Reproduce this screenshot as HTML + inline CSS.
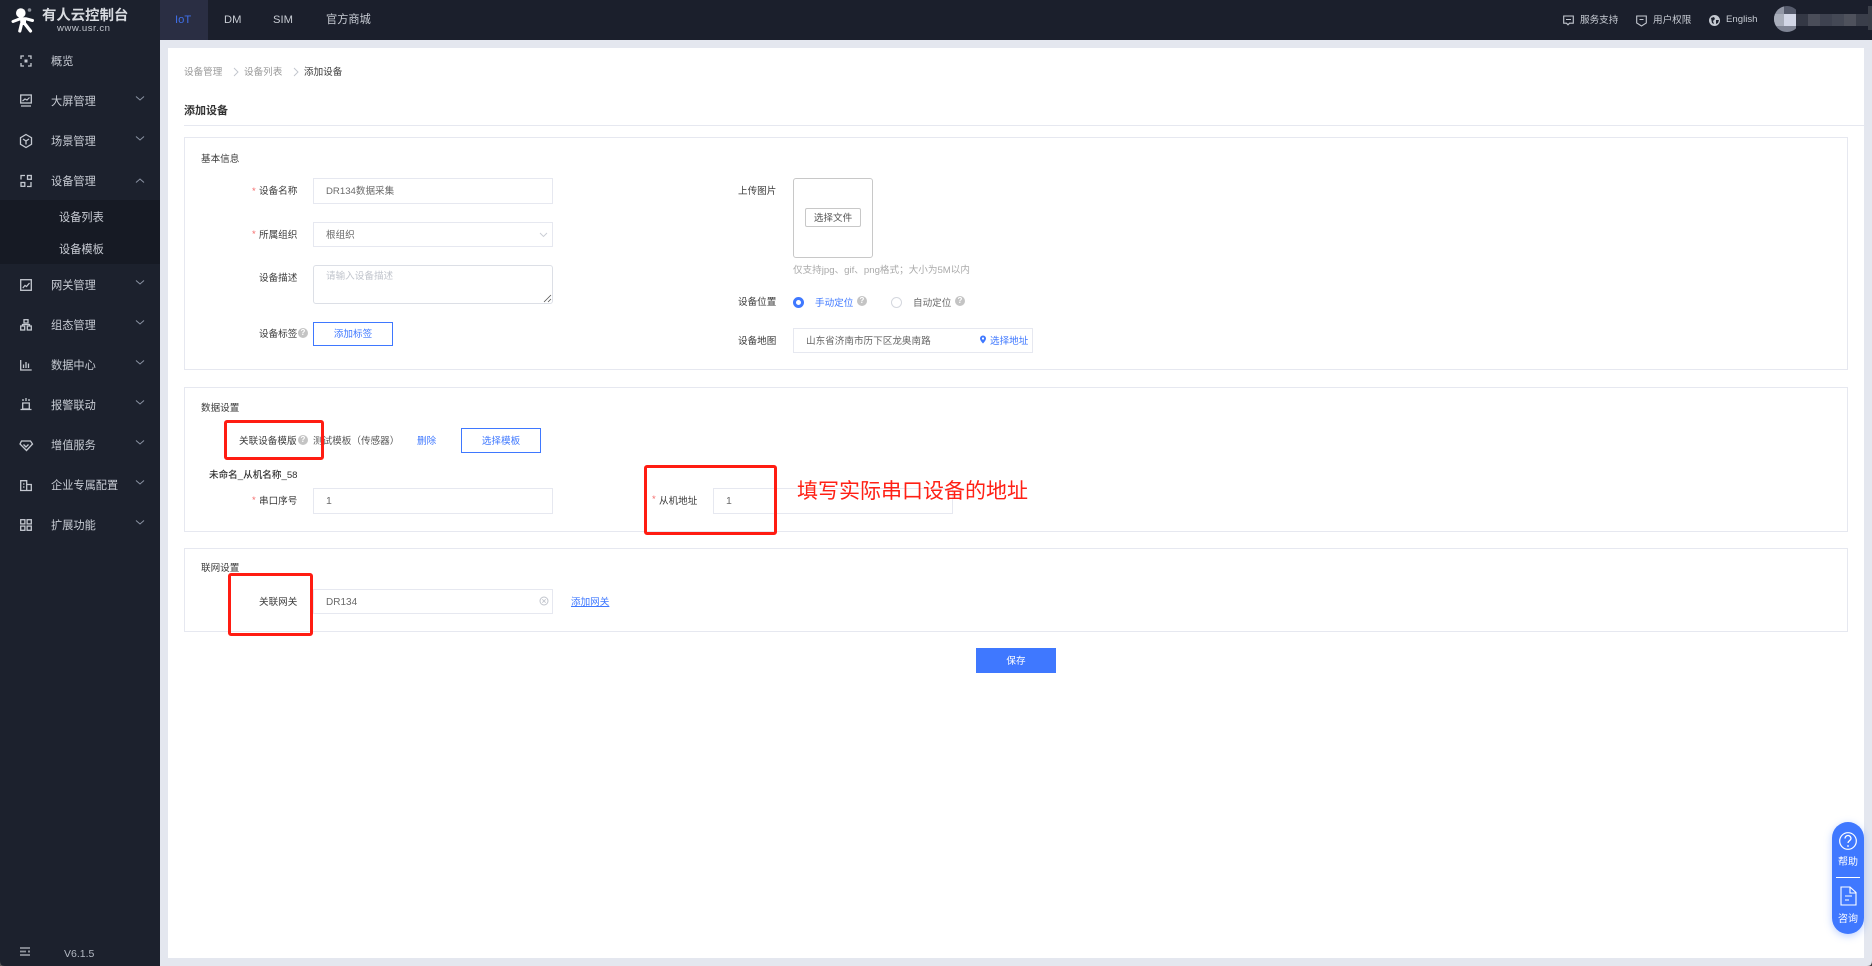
<!DOCTYPE html>
<html lang="zh-CN"><head><meta charset="utf-8"><title>添加设备</title>
<style>
*{box-sizing:border-box}
html,body{margin:0;padding:0;width:1872px;height:966px;overflow:hidden;background:#e4e7ef;font-family:"Liberation Sans","Noto Sans CJK SC",sans-serif}
.a{position:absolute}
.t{position:absolute;white-space:nowrap;line-height:20px;height:20px}
.s{font-size:11.2px;color:#c8ccd4}
.l{font-size:9.6px;color:#3a3a3a;margin-top:1px}
.v{font-size:9.6px;color:#6a6a6a;margin-top:1px}
.b{font-size:9.6px;color:#3f78ff;margin-top:1px}
.st{font-size:9.6px;color:#f56c6c}
.p{position:absolute;left:184px;width:1664px;background:#fff;border:1px solid #e6e8f0}
.i{position:absolute;background:#fff;border:1px solid #e6e8f0}
.q{position:absolute;width:10px;height:10px;border-radius:50%;background:#c4c4c4;color:#fff;font-size:8px;line-height:10px;text-align:center;font-weight:700}
.btn{position:absolute;border:1px solid #3f78ff;color:#3f78ff;font-size:9.6px;text-align:center;background:#fff}
.r{position:absolute;border:3px solid #ff1c12;border-radius:3px}
svg{position:absolute;overflow:visible}
.ic{fill:none;stroke:#c4c8d0;stroke-width:1.3}
.ch{fill:none;stroke:#8b93a3;stroke-width:1}
</style></head><body>

<!-- header -->
<div class="a" style="left:0;top:0;width:1872px;height:40px;background:#1b1f2c"></div>
<div class="a" style="left:160px;top:0;width:48px;height:40px;background:#2a2e43"></div>
<div class="t" style="left:175px;top:10px;font-size:11.2px;color:#3f6fe8">IoT</div>
<div class="t" style="left:224px;top:10px;font-size:11.2px;color:#c8ccd4">DM</div>
<div class="t" style="left:273px;top:10px;font-size:11.2px;color:#c8ccd4">SIM</div>
<div class="t s" style="left:326px;top:10px">官方商城</div>

<!-- sidebar -->
<div class="a" style="left:0;top:0;width:160px;height:966px;background:#1c212d"></div>
<div class="a" style="left:0;top:200px;width:160px;height:64px;background:#161a24"></div>
<svg style="left:0;top:0" width="40" height="40" viewBox="0 0 40 40">
<circle cx="20.800" cy="13" r="4.800" fill="#fff"/>
<path d="M13 21.500 L20 18.800 L26 18.800 L32.500 20.500" fill="none" stroke="#fff" stroke-width="3" stroke-linecap="round"/>
<path d="M20 18.500 L26 18.500 L26 25 L20.500 25 Z" fill="#fff"/>
<path d="M21.500 24 L19.800 31 M25 24 L30.500 31" fill="none" stroke="#fff" stroke-width="3.200" stroke-linecap="round"/>
<circle cx="29.500" cy="10" r="1.800" fill="#8a8f98"/>
</svg>
<div class="t" style="left:42px;top:6px;font-size:14.4px;font-weight:700;color:#d8dbe0">有人云控制台</div>
<div class="t" style="left:57px;top:19px;font-size:9.6px;font-weight:400;color:#c0c4cc;letter-spacing:.5px">www.usr.cn</div>

<div class="t s" style="left:51px;top:52px">概览</div>
<div class="t s" style="left:51px;top:92px">大屏管理</div>
<div class="t s" style="left:51px;top:132px">场景管理</div>
<div class="t s" style="left:51px;top:172px">设备管理</div>
<div class="t s" style="left:59px;top:208px">设备列表</div>
<div class="t s" style="left:59px;top:240px">设备模板</div>
<div class="t s" style="left:51px;top:276px">网关管理</div>
<div class="t s" style="left:51px;top:316px">组态管理</div>
<div class="t s" style="left:51px;top:356px">数据中心</div>
<div class="t s" style="left:51px;top:396px">报警联动</div>
<div class="t s" style="left:51px;top:436px">增值服务</div>
<div class="t s" style="left:51px;top:476px">企业专属配置</div>
<div class="t s" style="left:51px;top:516px">扩展功能</div>

<svg style="left:0;top:0" width="160" height="560">
<g class="ic">
<path d="M21 59v-3h3M28 56h3v3M31 63v3h-3M24 66h-3v-3"/><rect x="24.500" y="59.500" width="3" height="3" fill="#c4c8d0" stroke="none"/>
<rect x="20.700" y="95" width="10.600" height="8"/><path d="M22.500 101l2.500-2 2 1 2.500-2.500M21 106h10" stroke-width="1.200"/>
<path d="M26 134.500l5.500 3.200v6.600l-5.500 3.200-5.500-3.200v-6.600z"/><path d="M23 139l3 2 3-2M26 141v3.500"/>
<path d="M25 175.500h-4v4"/><rect x="27.500" y="175.500" width="3.800" height="3.800"/><rect x="21" y="182.500" width="3.800" height="3.800"/><path d="M31 182v4.500h-4"/>
<rect x="20.700" y="279.700" width="10.600" height="10.600"/><path d="M22.800 288l2.200-2.500 1.500 1 3-3.500"/>
<rect x="24" y="319.700" width="4" height="3.300"/><rect x="20.700" y="326" width="4" height="4"/><rect x="27.300" y="326" width="4" height="4"/><path d="M22.500 326v-1.500h7v1.500"/>
<path d="M20.700 360v10h11M23.500 368v-3.500M26 368v-6M28.500 368v-4.500"/>
<path d="M23 401v-2M26 401v-3M29 401v-2M22.700 403h6.600v6h-6.600zM20.500 409.500h11"/>
<path d="M21.500 441h9l2 3-6 6.500-6.500-6.500z"/><path d="M23.500 444.500l2.500 2.500 2.500-2.500"/>
<path d="M20.700 490.500V480.700h6v9.800M26.700 484.500h4.600v6M20 490.500h12"/><path d="M23 484h1.500M23 487h1.500"/>
<rect x="20.700" y="519.700" width="4.200" height="4.200"/><rect x="27.100" y="519.700" width="4.200" height="4.200"/><rect x="20.700" y="526.100" width="4.200" height="4.200"/><rect x="27.100" y="526.100" width="4.200" height="4.200"/>
</g>
<g class="ch">
<path d="M136 96.500l4 3.500 4-3.500M136 136.500l4 3.500 4-3.500M136 182.500l4-3.500 4 3.500M136 280.500l4 3.500 4-3.500M136 320.500l4 3.500 4-3.500M136 360.500l4 3.500 4-3.500M136 400.500l4 3.500 4-3.500M136 440.500l4 3.500 4-3.500M136 480.500l4 3.500 4-3.500M136 520.500l4 3.500 4-3.500"/>
</g>
</svg>
<svg style="left:20px;top:947px" width="11" height="10"><path d="M0 1h10M0 4.500h6M0 8h10" stroke="#8f939b" stroke-width="1.800" fill="none"/><rect x="8" y="3.500" width="2" height="2" fill="#8f939b"/></svg>
<div class="t" style="left:64px;top:944px;font-size:10.500px;color:#b4bac4">V6.1.5</div>

<!-- header right -->
<svg style="left:1563px;top:15px" width="11" height="11"><path d="M.7 1h9.600v7.200H6.500L5 9.800 3.500 8.200H.7zM3 4.500h5" fill="none" stroke="#c4c8d0" stroke-width="1.100"/></svg>
<div class="t" style="left:1580px;top:11px;font-size:9.6px;color:#c8ccd4">服务支持</div>
<svg style="left:1636px;top:15px" width="11" height="12"><path d="M.7 1h9.600v7L5.500 11 .7 8zM3.500 4.500h4" fill="none" stroke="#c4c8d0" stroke-width="1.100"/></svg>
<div class="t" style="left:1653px;top:11px;font-size:9.6px;color:#c8ccd4">用户权限</div>
<svg style="left:1709px;top:15px" width="11" height="11"><circle cx="5.500" cy="5.500" r="5.500" fill="#c4c8d0"/><path d="M2 3l3-1 1 2-2 2 1 3-2-1zM7 5l3 0-1 3-2 1z" fill="#1b1f2c"/></svg>
<div class="t" style="left:1726px;top:10px;font-size:9.6px;color:#c8ccd4">English</div>
<div class="a" style="left:1774px;top:6px;width:26px;height:26px;border-radius:50%;overflow:hidden;background:#1b1f2c">
<div class="a" style="left:0;top:0;width:10px;height:26px;background:#9297a6"></div>
<div class="a" style="left:10px;top:0;width:12px;height:8px;background:#565b6c"></div>
<div class="a" style="left:10px;top:8px;width:12px;height:12px;background:#d2d6e6"></div>
<div class="a" style="left:0;top:8px;width:10px;height:12px;background:#a9aebb"></div>
<div class="a" style="left:0;top:20px;width:22px;height:6px;background:#7f8494"></div>
<div class="a" style="left:22px;top:0;width:4px;height:26px;background:#1b1f2c"></div>
</div>
<div class="a" style="left:1796px;top:14px;width:12px;height:12px;background:#343845"></div>
<div class="a" style="left:1808px;top:14px;width:12px;height:12px;background:#4a4d59"></div>
<div class="a" style="left:1820px;top:14px;width:12px;height:12px;background:#3e4250"></div>
<div class="a" style="left:1832px;top:14px;width:12px;height:12px;background:#444855"></div>
<div class="a" style="left:1844px;top:14px;width:12px;height:12px;background:#4e515c"></div>
<div class="a" style="left:1856px;top:14px;width:12px;height:12px;background:#3a3e4a"></div>
<div class="a" style="left:1868px;top:6px;width:4px;height:24px;background:#3a3e48"></div>

<!-- card -->
<div class="a" style="left:168px;top:48px;width:1696px;height:910px;background:#fff"></div>
<div class="t v" style="left:184px;top:62px;color:#999">设备管理</div>
<svg style="left:233px;top:67px" width="6" height="10"><path d="M1 1l4 4-4 4" fill="none" stroke="#c0c4cc" stroke-width=".9"/></svg>
<div class="t v" style="left:244px;top:62px;color:#999">设备列表</div>
<svg style="left:293px;top:67px" width="6" height="10"><path d="M1 1l4 4-4 4" fill="none" stroke="#c0c4cc" stroke-width=".9"/></svg>
<div class="t l" style="left:304px;top:62px">添加设备</div>
<div class="t" style="left:184px;top:101px;font-size:11px;font-weight:700;color:#333">添加设备</div>
<div class="a" style="left:184px;top:125px;width:1680px;height:1px;background:#e6e8f0"></div>

<!-- panel 1 -->
<div class="p" style="top:137px;height:233px"></div>
<div class="t l" style="left:201px;top:149px">基本信息</div>
<div class="t st" style="left:252px;top:182px">*</div><div class="t l" style="left:259px;top:181px">设备名称</div>
<div class="i" style="left:313px;top:178px;width:240px;height:26px"></div>
<div class="t v" style="left:326px;top:181px">DR134数据采集</div>
<div class="t st" style="left:252px;top:225px">*</div><div class="t l" style="left:259px;top:225px">所属组织</div>
<div class="i" style="left:313px;top:222px;width:240px;height:25px"></div>
<div class="t v" style="left:326px;top:225px">根组织</div>
<svg style="left:539px;top:232px" width="9" height="6"><path d="M1 1l3.500 3.500L8 1" fill="none" stroke="#c8ccd4" stroke-width=".9"/></svg>
<div class="t l" style="left:259px;top:268px">设备描述</div>
<div class="i" style="left:313px;top:265px;width:240px;height:39px;border-color:#dcdfe6;border-radius:3px"></div>
<div class="t v" style="left:326px;top:266px;color:#c0c4cc">请输入设备描述</div>
<svg style="left:544px;top:295px" width="8" height="8"><path d="M0 7l7-7M4 7l3-3" stroke="#555" stroke-width=".8" fill="none"/></svg>
<div class="t l" style="left:259px;top:324px">设备标签</div><div class="q" style="left:298px;top:328px">?</div>
<div class="btn" style="left:313px;top:322px;width:80px;height:24px;line-height:24px">添加标签</div>

<div class="t l" style="left:738px;top:181px">上传图片</div>
<div class="a" style="left:793px;top:178px;width:80px;height:80px;border:1px solid #c8c8c8;border-radius:3px;background:#fff"></div>
<div class="a" style="left:805px;top:208px;width:56px;height:19px;border:1px solid #c8c8c8;border-radius:2px;font-size:9.6px;color:#555;text-align:center;line-height:19px">选择文件</div>
<div class="t v" style="left:793px;top:260px;color:#aaa">仅支持jpg、gif、png格式；大小为5M以内</div>
<div class="t l" style="left:738px;top:292px">设备位置</div>
<div class="a" style="left:793px;top:297px;width:11px;height:11px;border-radius:50%;border:3.500px solid #3f78ff;background:#fff"></div>
<div class="t b" style="left:815px;top:293px">手动定位</div><div class="q" style="left:857px;top:296px">?</div>
<div class="a" style="left:891px;top:297px;width:11px;height:11px;border-radius:50%;border:1px solid #d4d7de;background:#fff"></div>
<div class="t v" style="left:913px;top:293px">自动定位</div><div class="q" style="left:955px;top:296px">?</div>
<div class="t l" style="left:738px;top:331px">设备地图</div>
<div class="i" style="left:793px;top:328px;width:240px;height:25px"></div>
<div class="t v" style="left:806px;top:331px;color:#666">山东省济南市历下区龙奥南路</div>
<svg style="left:979px;top:335px" width="8" height="9"><path d="M4 .5a3 3 0 013 3c0 2-3 5-3 5s-3-3-3-5a3 3 0 013-3z" fill="#3f78ff"/><circle cx="4" cy="3.500" r="1.100" fill="#fff"/></svg>
<div class="t b" style="left:990px;top:331px">选择地址</div>

<!-- panel 2 -->
<div class="p" style="top:387px;height:145px"></div>
<div class="t l" style="left:201px;top:398px">数据设置</div>
<div class="t l" style="left:239px;top:431px">关联设备模版</div><div class="q" style="left:298px;top:435px">?</div>
<div class="t v" style="left:313px;top:431px;color:#555">测试模板（传感器）</div>
<div class="t b" style="left:417px;top:431px">删除</div>
<div class="btn" style="left:461px;top:428px;width:80px;height:25px;line-height:25px">选择模板</div>
<div class="t" style="left:209px;top:466px;font-size:9.6px;color:#333;font-weight:500">未命名_从机名称_58</div>
<div class="t st" style="left:252px;top:491px">*</div><div class="t l" style="left:259px;top:491px">串口序号</div>
<div class="i" style="left:313px;top:488px;width:240px;height:26px"></div>
<div class="t v" style="left:326px;top:490px;font-size:10.500px">1</div>
<div class="t st" style="left:652px;top:490px">*</div><div class="t l" style="left:659px;top:491px">从机地址</div>
<div class="i" style="left:713px;top:488px;width:240px;height:26px"></div>
<div class="t v" style="left:726px;top:490px;font-size:10.500px">1</div>

<!-- panel 3 -->
<div class="p" style="top:548px;height:84px"></div>
<div class="t l" style="left:201px;top:558px">联网设置</div>
<div class="t l" style="left:259px;top:592px">关联网关</div>
<div class="i" style="left:313px;top:589px;width:240px;height:25px"></div>
<div class="t v" style="left:326px;top:592px;font-size:10px">DR134</div>
<svg style="left:539px;top:596px" width="10" height="10"><circle cx="5" cy="5" r="4" fill="none" stroke="#c0c4cc" stroke-width="1"/><path d="M3.300 3.300l3.400 3.400M6.700 3.300l-3.400 3.400" stroke="#c0c4cc" stroke-width=".8"/></svg>
<div class="t b" style="left:571px;top:592px;text-decoration:underline">添加网关</div>

<div class="a" style="left:976px;top:648px;width:80px;height:25px;background:#3f78ff;color:#fff;font-size:9.6px;text-align:center;line-height:27px">保存</div>

<!-- annotations -->
<div class="r" style="left:224px;top:420px;width:100px;height:40px"></div>
<div class="r" style="left:228px;top:573px;width:85px;height:63px"></div>
<div class="r" style="left:644px;top:465px;width:133px;height:70px"></div>
<div class="a" style="left:797px;top:479px;font-size:21px;line-height:26px;color:#ff2015;white-space:nowrap;font-weight:400">填写实际串口设备的地址</div>

<!-- floating -->
<div class="a" style="left:1832px;top:822px;width:32px;height:112px;border-radius:16px;background:#3f78ff;box-shadow:0 2px 8px rgba(63,120,255,.35)"></div>
<svg style="left:1832px;top:822px" width="32" height="112">
<circle cx="16" cy="19" r="8.300" fill="none" stroke="#fff" stroke-width="1.200"/>
<path d="M13 16.500a3 3 0 116 0c0 2-3 2.300-3 4.500" fill="none" stroke="#fff" stroke-width="1.300"/><circle cx="16" cy="24" r=".9" fill="#fff"/>
<path d="M4 55.500h24" stroke="#fff" stroke-width="1"/>
<path d="M9 65h9l6 5.500V83H9z" fill="none" stroke="#fff" stroke-width="1.100"/><path d="M18 65v6h6M13 74h7M13 78h4" fill="none" stroke="#fff" stroke-width="1.100"/>
</svg>
<div class="t" style="left:1838px;top:853px;font-size:10px;color:#fff">帮助</div>
<div class="t" style="left:1838px;top:910px;font-size:10px;color:#fff">咨询</div>

<!-- window corners -->
<svg style="left:0;top:958px" width="8" height="8"><path d="M0 3q0 5 5 5H0z" fill="#555"/></svg>
<svg style="left:1864px;top:958px" width="8" height="8"><path d="M8 3q0 5-5 5h5z" fill="#444"/></svg>
</body></html>
